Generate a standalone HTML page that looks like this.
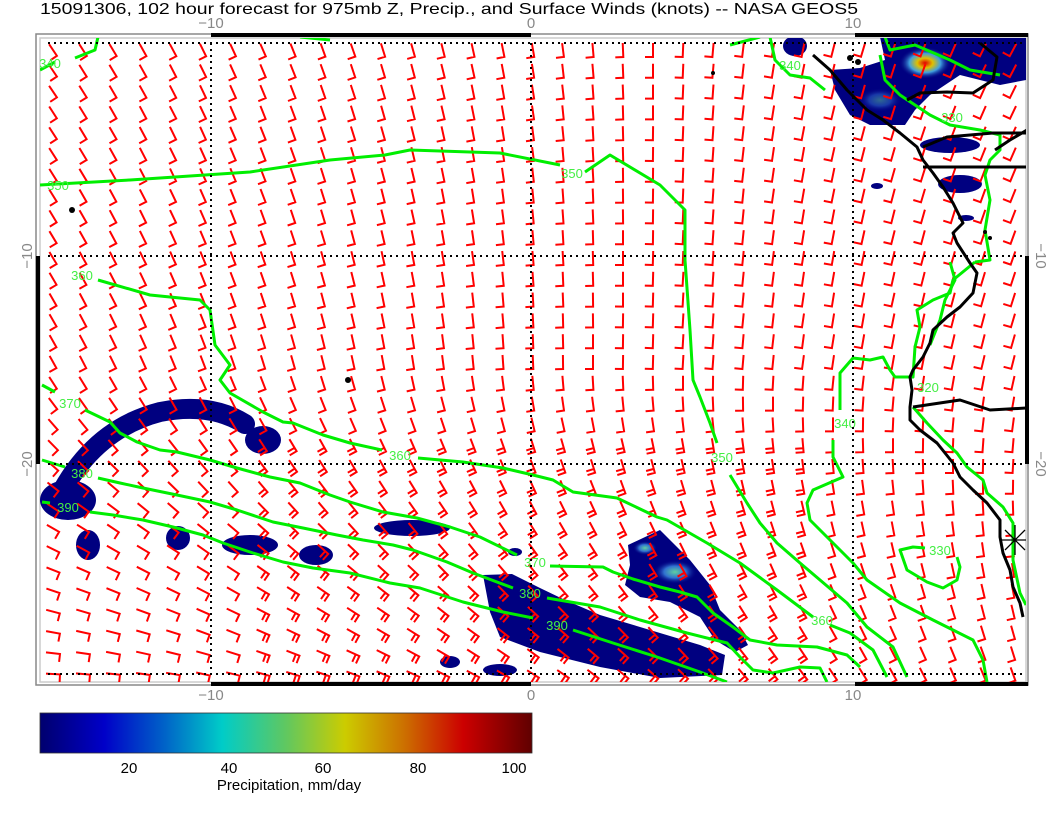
<!DOCTYPE html>
<html><head><meta charset="utf-8"><style>
html,body{margin:0;padding:0;background:#fff;}
svg{display:block;font-family:"Liberation Sans",sans-serif;}
</style></head><body>
<svg id="s" width="1056" height="816" viewBox="0 0 1056 816" xmlns="http://www.w3.org/2000/svg">
<defs>
<linearGradient id="cb" x1="0" x2="1" y1="0" y2="0">
<stop offset="0" stop-color="#00006e"/><stop offset="0.13" stop-color="#0000c8"/>
<stop offset="0.25" stop-color="#0060c8"/><stop offset="0.37" stop-color="#00ccc8"/>
<stop offset="0.5" stop-color="#60c860"/><stop offset="0.62" stop-color="#cccc00"/>
<stop offset="0.74" stop-color="#cc7000"/><stop offset="0.86" stop-color="#cc0000"/>
<stop offset="1" stop-color="#600000"/></linearGradient>
<radialGradient id="hot"><stop offset="0" stop-color="#e00000"/><stop offset="0.3" stop-color="#e0c000"/><stop offset="0.6" stop-color="#40a0e0"/><stop offset="1" stop-color="#000080" stop-opacity="0"/></radialGradient>
<radialGradient id="warm"><stop offset="0" stop-color="#60d0a0"/><stop offset="0.5" stop-color="#3070d0"/><stop offset="1" stop-color="#000080" stop-opacity="0"/></radialGradient>
<clipPath id="fr"><rect x="40" y="38" width="986" height="644"/></clipPath>
</defs>
<text x="40" y="14" font-size="16" textLength="818" lengthAdjust="spacingAndGlyphs">15091306, 102 hour forecast for 975mb Z, Precip., and Surface Winds (knots) -- NASA GEOS5</text>
<g fill="#888" font-size="15" text-anchor="middle">
<text x="211" y="28">−10</text><text x="531" y="28">0</text><text x="853" y="28">10</text>
<text x="211" y="700">−10</text><text x="531" y="700">0</text><text x="853" y="700">10</text>
<text transform="translate(32,256) rotate(-90)">−10</text>
<text transform="translate(32,464) rotate(-90)">−20</text>
<text transform="translate(1036,256) rotate(90)">−10</text>
<text transform="translate(1036,464) rotate(90)">−20</text>
</g>
<rect x="36" y="34" width="992" height="651" fill="none" stroke="#888" stroke-width="1.5"/>
<rect x="40" y="38" width="986" height="644" fill="none" stroke="#ccc" stroke-width="1.5"/>
<g clip-path="url(#fr)">
<g fill="#000080">
<path d="M55 505 Q90 430 160 412 Q210 402 245 424" fill="none" stroke="#000080" stroke-width="20" stroke-linecap="round"/>
<ellipse cx="68" cy="500" rx="28" ry="20"/><ellipse cx="88" cy="545" rx="12" ry="15"/>
<ellipse cx="263" cy="440" rx="18" ry="14"/><ellipse cx="178" cy="538" rx="12" ry="12"/>
<ellipse cx="250" cy="545" rx="28" ry="10"/><ellipse cx="316" cy="555" rx="17" ry="10"/>
<ellipse cx="412" cy="528" rx="38" ry="8"/>
<path d="M483 575 L512 574 L540 588 L565 600 L600 615 L650 630 L700 645 L725 655 L722 675 L660 678 L600 667 L540 652 L500 637 L490 612 Z"/>
<path d="M628 545 L660 530 L690 560 L710 585 L720 610 L740 630 L748 645 L735 652 L715 640 L700 617 L670 602 L640 597 L625 585 L630 565 Z"/>
<ellipse cx="450" cy="662" rx="10" ry="6"/><ellipse cx="500" cy="670" rx="17" ry="6"/>
<path d="M880 37 L1026 37 L1026 80 L1000 85 L960 75 L930 95 L915 110 L905 125 L870 125 L850 115 L835 90 L830 70 L860 68 L885 60 Z"/>
<ellipse cx="795" cy="46" rx="12" ry="10"/>
<ellipse cx="950" cy="145" rx="30" ry="8"/><ellipse cx="960" cy="184" rx="22" ry="9"/>
<ellipse cx="877" cy="186" rx="6" ry="3"/><ellipse cx="966" cy="218" rx="8" ry="3"/>
<ellipse cx="515" cy="552" rx="7" ry="4"/>
</g>
<ellipse cx="925" cy="63" rx="26" ry="16" fill="url(#hot)"/>
<ellipse cx="675" cy="572" rx="22" ry="12" fill="url(#warm)"/>
<ellipse cx="645" cy="548" rx="12" ry="7" fill="url(#warm)"/>
<ellipse cx="880" cy="100" rx="22" ry="12" fill="url(#warm)" opacity="0.5"/>
<g id="barbs" stroke="#ff0000" stroke-width="2" fill="none"></g>
<g stroke="#00ee00" stroke-width="3" fill="none" stroke-linejoin="round">
<polyline points="40,185 130,180 250,172 330,160 385,155 410,150 500,153 560,165"/>
<polyline points="585,172 610,155 660,185 685,210 685,260 690,330 693,380 700,397 710,423 717,443"/>
<polyline points="730,475 747,503 760,523 777,543 800,563 820,580 847,603 867,627 893,647 907,677"/>
<polyline points="98,280 150,295 200,300 210,310 215,345 230,365 220,380 230,393 263,412 283,422 293,423 323,435 350,443 382,450"/>
<polyline points="418,458 463,462 503,468 533,475 553,480 573,492 617,498 657,517 667,520 707,543 740,563 777,590 813,617"/>
<polyline points="830,625 850,633 873,650 887,677"/>
<polyline points="42,385 55,392"/>
<polyline points="85,410 110,422 120,433 137,442 160,450 177,452 210,460 237,468 270,477 300,483 330,495 350,502 383,512 417,518 450,527 480,537 517,555"/>
<polyline points="550,566 603,567 613,572 633,579 660,587 680,592 697,597 713,613 733,627 750,640 777,645 817,647 847,655 860,667"/>
<polyline points="42,460 65,467"/>
<polyline points="98,478 120,483 143,488 177,495 210,502 237,510 273,522 303,528 337,535 363,540 393,545 413,550 447,562 473,573 513,588"/>
<polyline points="547,598 600,607 640,620 687,633 727,643 740,657 753,670 773,673 800,667 820,668 827,682"/>
<polyline points="42,502 50,503"/>
<polyline points="90,512 113,515 143,520 173,527 203,535 223,543 253,553 283,562 313,568 350,573 390,583 420,588 463,602 503,612 533,618"/>
<polyline points="573,630 613,643 657,657 700,672 727,682"/>
<polyline points="840,380 840,410"/>
<polyline points="833,440 833,457 843,477 813,490 807,503 810,520 830,540 853,563 867,580 900,603 933,620 953,630 973,640 983,660 987,682"/>
<polyline points="840,407 840,373 853,358 870,360 883,357 890,370 895,377 913,377 915,347 920,327 917,310 933,300 950,293 953,280 975,262"/>
<polyline points="925,548 913,547 900,550 907,570 927,582 943,588 957,580 960,567 957,557"/>
<polyline points="913,407 927,423 943,440 957,453 967,467 983,480 987,493 1003,507 1013,523 1013,560 1020,593 1026,605"/>
<polyline points="40,70 55,62"/><polyline points="75,58 95,50 98,37"/>
<polyline points="730,45 760,37"/><polyline points="770,37 775,60 790,75 810,78 825,90"/>
<polyline points="885,37 890,50 915,45 950,60 970,70 1000,75"/>
<polyline points="880,55 885,80 900,95 930,115 950,125 980,130 1000,135 1000,150 990,160 985,175 990,200 985,230 990,260 975,262"/>
<polyline points="950,262 955,280 945,300 940,320 930,345"/>
<polyline points="300,37 330,40"/>
</g>
<g fill="#44ee44" font-size="13" text-anchor="middle">
<text x="572" y="178">350</text><text x="50" y="68">340</text><text x="58" y="190">350</text>
<text x="82" y="280">360</text><text x="400" y="460">360</text><text x="70" y="408">370</text>
<text x="82" y="478">380</text><text x="68" y="512">390</text><text x="535" y="567">370</text>
<text x="530" y="598">380</text><text x="557" y="630">390</text><text x="722" y="462">350</text>
<text x="822" y="625">360</text><text x="845" y="428">340</text><text x="940" y="555">330</text>
<text x="952" y="122">330</text><text x="928" y="392">320</text><text x="790" y="70">340</text>
</g>
<g stroke="#000" stroke-width="3" fill="none" stroke-linejoin="round">
<polyline points="813,55 830,70 847,90 867,110 883,120 900,133 917,147 923,160 933,173 943,187 953,203 963,223 953,233 957,243 970,263 977,273 973,293 960,307 947,317 933,330 930,343 923,357 913,370 910,377 912,390 910,407 910,420 920,430 937,443 953,463 960,477 973,490 987,503 1000,520 1000,537 1003,553 1010,570 1013,587 1020,603 1023,617"/>
<polyline points="913,407 960,400 990,410 1027,408"/>
<polyline points="923,167 1027,167"/>
<polyline points="923,147 947,137 993,133 1027,133"/>
<polyline points="907,100 920,93 947,92 973,93 993,80 997,57 980,43"/>
<polyline points="995,150 1010,140 1027,130"/>
<path d="M1000 540 L1030 540 M1015 525 L1015 555 M1005 530 L1025 550 M1025 530 L1005 550" stroke-width="1.3"/>
</g>
<g fill="#000"><circle cx="72" cy="210" r="3"/><circle cx="348" cy="380" r="3"/><circle cx="713" cy="73" r="2"/>
<circle cx="850" cy="58" r="3"/><circle cx="858" cy="62" r="3"/><circle cx="985" cy="232" r="2"/><circle cx="990" cy="238" r="2"/></g>
<g stroke="#000" stroke-width="2" stroke-dasharray="2,4" fill="none">
<line x1="48" y1="43" x2="1022" y2="43"/><line x1="48" y1="674" x2="1022" y2="674"/>
<line x1="48" y1="256" x2="1022" y2="256"/><line x1="48" y1="464" x2="1022" y2="464"/>
<line x1="211" y1="43" x2="211" y2="674"/><line x1="531" y1="43" x2="531" y2="674"/><line x1="853" y1="43" x2="853" y2="674"/>
</g>
</g>
<g fill="#000">
<rect x="211" y="33" width="320" height="4"/><rect x="855" y="33" width="173" height="4"/>
<rect x="211" y="682" width="320" height="4"/><rect x="855" y="682" width="173" height="4"/>
<rect x="36" y="256" width="4" height="208"/><rect x="1025" y="256" width="4" height="208"/>
</g>
<rect x="40" y="713" width="492" height="40" fill="url(#cb)" stroke="#333" stroke-width="0.8"/>
<g font-size="15" text-anchor="middle" fill="#000">
<text x="129" y="773">20</text><text x="229" y="773">40</text><text x="323" y="773">60</text>
<text x="418" y="773">80</text><text x="514" y="773">100</text>
<text x="289" y="790">Precipitation, mm/day</text>
</g>
</svg>
<script>
(function(){
var g=document.getElementById('barbs'),ns='http://www.w3.org/2000/svg',d='';
var T=[[-125,-120,-180],[-100,-92,-150],[-60,-75,-110]];
function lerp(a,b,t){return a+(b-a)*t;}
function ang(u,v){
 function col(c){return v<0.5?lerp(T[c][0],T[c][1],v*2):lerp(T[c][1],T[c][2],(v-0.5)*2);}
 var a=col(0),b=col(1),c=col(2);
 return u<0.5?lerp(a,b,u*2):lerp(b,c,(u-0.5)*2);}
for(var i=0;i<33;i++){for(var j=0;j<31;j++){
 var x=53+30*i,y=50+20.8*j;
 var u=(x-38)/990,v=(y-37)/648;
 var p=ang(u,v)*Math.PI/180;
 var dx=Math.cos(p),dy=Math.sin(p);
 var L=14,t=8;
 var fx=x-dx*L/2,fy=y-dy*L/2;
 var tx=fx+dx*L,ty=fy+dy*L;
 var q=p-Math.PI/2;
 var kx=Math.cos(q)*t,ky=Math.sin(q)*t;
 d+='M'+tx.toFixed(1)+' '+ty.toFixed(1)+'L'+fx.toFixed(1)+' '+fy.toFixed(1)+'l'+kx.toFixed(1)+' '+ky.toFixed(1);
 if(u>0.2&&u<0.8&&v>0.6){var sx=fx+dx*4,sy=fy+dy*4;d+='M'+sx.toFixed(1)+' '+sy.toFixed(1)+'l'+kx.toFixed(1)+' '+ky.toFixed(1);}
}}
var pth=document.createElementNS(ns,'path');pth.setAttribute('d',d);g.appendChild(pth);
})();
</script>
</body></html>
